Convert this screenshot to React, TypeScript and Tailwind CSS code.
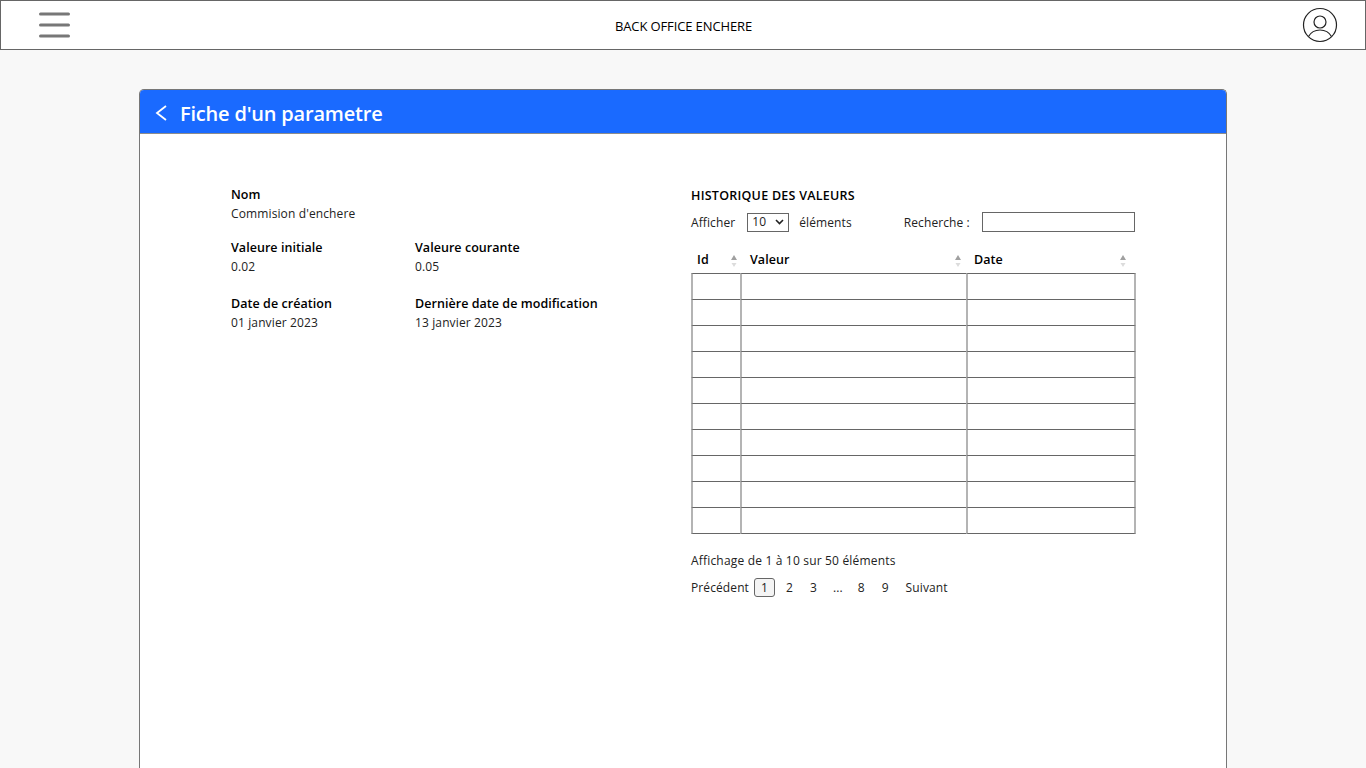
import React from "react";

const font = "[font-family:'Open_Sans',sans-serif]";

const SortIcon = () => (
  <svg width="8" height="14" viewBox="0 0 8 14" className="shrink-0">
    <path d="M4 1 L7 6 L1 6 Z" fill="#a0a0a0" />
    <path d="M4 13 L6.5 9 L1.5 9 Z" fill="#dcdcdc" />
  </svg>
);

const Field = ({ label, value, className }: { label: string; value: string; className?: string }) => (
  <div className={className}>
    <div className="text-[12.5px] leading-[18px] font-semibold text-black tracking-[0.05px]">{label}</div>
    <div className="mt-[1px] text-[12px] leading-[18px] text-[#222] tracking-[0.12px]">{value}</div>
  </div>
);

const columns = [
  { name: "Id", width: "w-[50px]", pad: "pl-[6px] pr-[3px]" },
  { name: "Valeur", width: "w-[226px]", pad: "pl-[9px] pr-[5px]" },
  { name: "Date", width: "w-[168px]", pad: "pl-[7px] pr-[8px]" },
];

const rows = Array.from({ length: 10 });

export default function App() {
  return (
    <div className={`${font} flex h-[768px] flex-col overflow-hidden bg-[#f8f8f8]`}>
      <header className="flex h-[50px] shrink-0 items-center justify-between border border-[#666] bg-white pl-[37px] pr-[27px]">
        <svg width="33" height="27" viewBox="0 0 33 27" fill="none" stroke="#777" strokeWidth="3" strokeLinecap="round">
          <path d="M2.5 2h28M2.5 13h28M2.5 24h28" />
        </svg>
        <div className="translate-x-[-3px] translate-y-[2px] text-[13px] font-normal tracking-[-0.12px] text-black">BACK OFFICE ENCHERE</div>
        <svg width="36" height="36" viewBox="0 0 36 36" fill="none" stroke="#222" strokeWidth="1.2">
          <circle cx="18" cy="18" r="16.5" />
          <circle cx="18" cy="15" r="6" />
          <path d="M6.5 29.5C9 25 13 23 18 23s9 2 11.5 6.5" />
        </svg>
      </header>

      <main className="mx-[139px] mt-[39px] flex flex-1 flex-col rounded-t-[5px] border border-b-0 border-[#777] bg-white">
        <div className="flex h-[44px] shrink-0 items-center gap-[13px] rounded-t-[4px] border-b border-[#8c8c8c] bg-[#1a6aff] pl-[15px]">
          <svg width="12" height="16" viewBox="0 0 12 16" fill="none" stroke="#fff" strokeWidth="1.8" className="translate-y-[1px]">
            <path d="M11 1 L2 8 L11 15" />
          </svg>
          <h1 className="translate-y-[2px] text-[20px] font-semibold tracking-[-0.2px] text-white">Fiche d'un parametre</h1>
        </div>

        <div className="flex pl-[91px] pt-[52px]">
          <section className="w-[460px] shrink-0">
            <Field label="Nom" value="Commision d'enchere" />
            <div className="mt-[16px] flex">
              <Field className="w-[184px]" label="Valeure initiale" value="0.02" />
              <Field label="Valeure courante" value="0.05" />
            </div>
            <div className="mt-[19px] flex">
              <Field className="w-[184px]" label="Date de création" value="01 janvier 2023" />
              <Field label="Dernière date de modification" value="13 janvier 2023" />
            </div>
          </section>

          <section className="w-[444px] text-[12px] tracking-[0.1px] text-[#222]">
            <h2 className="mt-[1px] text-[12.5px] leading-[18px] font-semibold tracking-[0.25px] text-black">HISTORIQUE DES VALEURS</h2>
            <div className="mt-[7px] flex h-[20px] items-center">
              <span className="translate-y-[1px]">Afficher</span>
              <div className="ml-[12px] flex h-[19px] w-[42px] items-center justify-between border border-[#666] pl-[4px] pr-[4px]">
                <span>10</span>
                <svg width="9" height="6" viewBox="0 0 9 6" fill="none" stroke="#222" strokeWidth="1.6">
                  <path d="M1 1l3.5 3.5L8 1" />
                </svg>
              </div>
              <span className="ml-[10px] translate-y-[1px]">éléments</span>
              <span className="ml-[52px] translate-y-[1px]">Recherche :</span>
              <div className="ml-auto h-[20px] w-[153px] border border-[#666] bg-white" />
            </div>

            <div className="mt-[16px] flex h-[25px] items-center">
              {columns.map((c) => (
                <div key={c.name} className={`${c.width} ${c.pad} flex items-center justify-between`}>
                  <span className="text-[12.5px] font-semibold tracking-[0.07px] text-black">{c.name}</span>
                  <SortIcon />
                </div>
              ))}
            </div>

            <table className="w-[445px] table-fixed border-separate border-spacing-0">
              <colgroup>
                <col className="w-[49px]" />
                <col className="w-[226px]" />
                <col className="w-[170px]" />
              </colgroup>
              <tbody>
                {rows.map((_, i) => (
                  <tr key={i} className="h-[26px] last:h-[27px]">
                    <td className="border-t border-l-2 border-t-[#666] border-l-[#b4b4b4] [tr:last-child_&]:border-b [tr:last-child_&]:border-b-[#666]" />
                    <td className="border-t border-l-2 border-t-[#666] border-l-[#b4b4b4] [tr:last-child_&]:border-b [tr:last-child_&]:border-b-[#666]" />
                    <td className="border-t border-x-2 border-t-[#666] border-x-[#b4b4b4] [tr:last-child_&]:border-b [tr:last-child_&]:border-b-[#666]" />
                  </tr>
                ))}
              </tbody>
            </table>

            <div className="mt-[18px] leading-[18px] tracking-[0.18px]">Affichage de 1 à 10 sur 50 éléments</div>
            <div className="mt-[8px] flex h-[19px] items-center">
              <span>Précédent</span>
              <span className="ml-[5px] flex h-[19px] w-[21px] items-center justify-center rounded-[3px] border border-[#666] bg-[#f4f4f4]">1</span>
              <span className="ml-[11px]">2</span>
              <span className="ml-[17px]">3</span>
              <span className="ml-[16px]">...</span>
              <span className="ml-[15px]">8</span>
              <span className="ml-[17px]">9</span>
              <span className="ml-[17px]">Suivant</span>
            </div>
          </section>
        </div>
      </main>
    </div>
  );
}
